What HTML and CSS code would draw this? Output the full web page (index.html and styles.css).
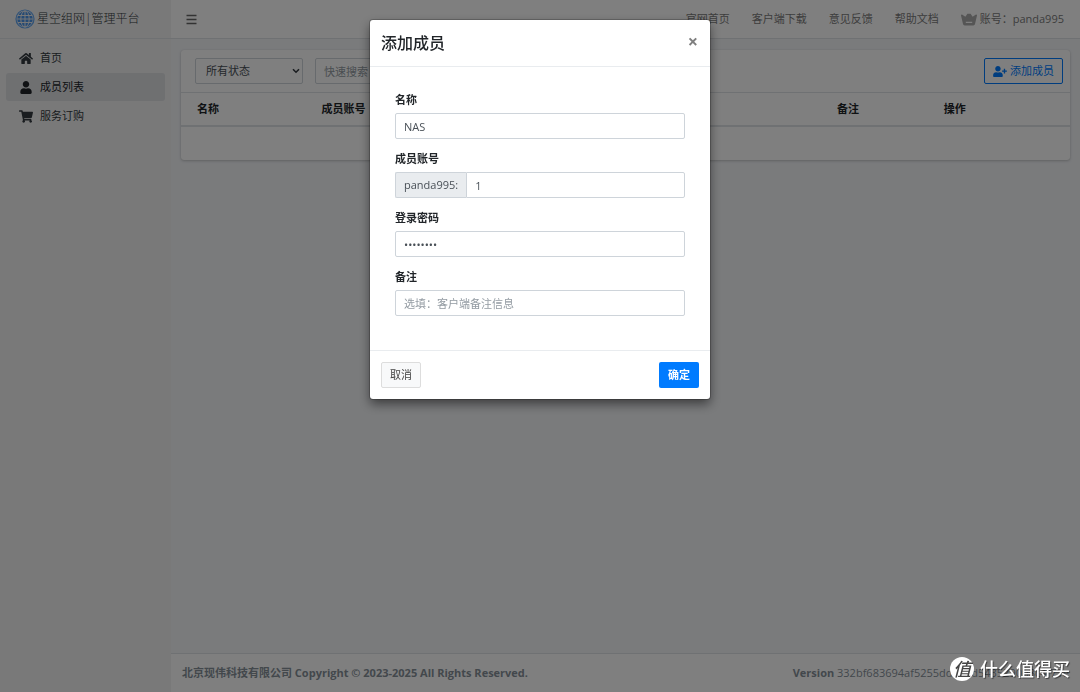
FILE: index.html
```html
<!DOCTYPE html>
<html lang="zh-CN">
<head>
<meta charset="utf-8">
<meta name="viewport" content="width=device-width, initial-scale=1">
<title>星空组网|管理平台</title>
<link rel="stylesheet" href="styles.css">
</head>
<body>
<div class="app">
  <aside class="sidebar">
    <a class="brand" href="#">
      <svg class="brand-logo" viewBox="0 0 20 20" fill="none" stroke="#eee" stroke-width="1">
        <circle cx="10" cy="10" r="9" stroke="#62a5ef" stroke-width="1.2"/>
        <circle cx="10" cy="10" r="7.8" fill="#4a94e8" stroke="none"/>
        <path d="M10 2v16M3 6.5h14M2 10h16M3 13.5h14"/>
        <ellipse cx="10" cy="10" rx="4.2" ry="8"/>
      </svg>
      <span>星空组网|管理平台</span>
    </a>
    <nav class="menu">
      <a class="menu-item" href="#">
        <svg class="icon" viewBox="0 0 576 512"><path d="M280.37 148.26L96 300.11V464a16 16 0 0 0 16 16l112.06-.29a16 16 0 0 0 15.92-16V368a16 16 0 0 1 16-16h64a16 16 0 0 1 16 16v95.64a16 16 0 0 0 16 16.05L464 480a16 16 0 0 0 16-16V300L295.67 148.26a12.19 12.19 0 0 0-15.3 0zM571.6 251.47L488 182.56V44.05a12 12 0 0 0-12-12h-56a12 12 0 0 0-12 12v72.61L318.47 43a48 48 0 0 0-61 0L4.34 251.47a12 12 0 0 0-1.6 16.9l25.5 31A12 12 0 0 0 45.15 301l235.22-193.74a12.19 12.19 0 0 1 15.3 0L530.9 301a12 12 0 0 0 16.9-1.6l25.5-31a12 12 0 0 0-1.7-16.93z"/></svg>
        <span>首页</span>
      </a>
      <a class="menu-item menu-item-active" href="#" aria-current="page">
        <svg class="icon" viewBox="0 0 448 512"><path d="M224 256c70.7 0 128-57.3 128-128S294.7 0 224 0 96 57.3 96 128s57.3 128 128 128zm89.6 32h-16.7c-22.2 10.2-46.9 16-72.9 16s-50.6-5.8-72.9-16h-16.7C60.2 288 0 348.2 0 422.4V464c0 26.5 21.5 48 48 48h352c26.5 0 48-21.5 48-48v-41.6c0-74.2-60.2-134.4-134.4-134.4z"/></svg>
        <span>成员列表</span>
      </a>
      <a class="menu-item" href="#">
        <svg class="icon" viewBox="0 0 576 512"><path d="M528.12 301.319l47.273-208C578.806 78.301 567.391 64 551.99 64H159.208l-9.166-44.81C147.758 8.021 137.93 0 126.529 0H24C10.745 0 0 10.745 0 24v16c0 13.255 10.745 24 24 24h69.883l70.248 343.435C147.325 417.1 136 435.222 136 456c0 30.928 25.072 56 56 56s56-25.072 56-56c0-15.674-6.447-29.835-16.824-40h209.647C430.447 426.165 424 440.326 424 456c0 30.928 25.072 56 56 56s56-25.072 56-56c0-22.172-12.888-41.332-31.579-50.405l5.517-24.276c3.413-15.018-8.002-29.319-23.403-29.319H218.117l-6.545-32h293.145c11.206 0 20.92-7.754 23.403-18.681z"/></svg>
        <span>服务订购</span>
      </a>
    </nav>
  </aside>

  <div class="page">
    <header class="topbar">
      <button class="toggle" type="button" aria-label="菜单">
        <svg viewBox="0 0 11 11" fill="none" stroke="currentColor" stroke-width="1.4"><path d="M.5 1.5h10M.5 5.5h10M.5 9.5h10"/></svg>
      </button>
      <nav class="links">
        <a href="#">官网首页</a>
        <a href="#">客户端下载</a>
        <a href="#">意见反馈</a>
        <a href="#">帮助文档</a>
        <a class="account" href="#">
          <svg class="crown" viewBox="0 0 16 14"><path fill-rule="evenodd" d="M1 2.6 4.4 4.8 6.400 1.800h3.200l2 3L15 2.600a.7.7 0 0 1 1 .8L14 12a1.800 1.800 0 0 1-1.700 1.500H3.700A1.800 1.800 0 0 1 2 12L0 3.400a.7.7 0 0 1 1-.8zM4.800 9.800v1.200h6.400V9.800z"/></svg>
          <span>账号：panda995</span>
        </a>
      </nav>
    </header>

    <main class="content">
      <section class="card">
        <div class="toolbar">
          <div class="status">
            <select class="status-select" aria-label="状态"><option>所有状态</option></select>
            <svg class="status-arrow" viewBox="0 0 8 6" fill="none" stroke="currentColor" stroke-width="1.6"><path d="M1 1.200 4 4.200l3-3"/></svg>
          </div>
          <input class="search" type="text" placeholder="快速搜索" aria-label="快速搜索">
          <button class="btn btn-outline" type="button">
            <svg class="btn-icon" viewBox="0 0 640 512"><path d="M624 208h-64v-64c0-8.800-7.200-16-16-16h-32c-8.800 0-16 7.200-16 16v64h-64c-8.800 0-16 7.200-16 16v32c0 8.800 7.200 16 16 16h64v64c0 8.800 7.200 16 16 16h32c8.800 0 16-7.200 16-16v-64h64c8.800 0 16-7.200 16-16v-32c0-8.800-7.200-16-16-16zm-400 48c70.700 0 128-57.300 128-128S294.700 0 224 0 96 57.300 96 128s57.300 128 128 128zm89.600 32h-16.700c-22.200 10.200-46.900 16-72.900 16s-50.600-5.800-72.900-16h-16.700C60.200 288 0 348.200 0 422.400V464c0 26.500 21.500 48 48 48h352c26.500 0 48-21.500 48-48v-41.600c0-74.200-60.200-134.400-134.400-134.400z"/></svg>
            添加成员
          </button>
        </div>
        <table class="members">
          <thead>
            <tr>
              <th class="col-name">名称</th>
              <th class="col-login">成员账号</th>
              <th class="col-note">备注</th>
              <th class="col-action">操作</th>
            </tr>
          </thead>
          <tbody><tr><td colspan="4"></td></tr></tbody>
        </table>
      </section>
    </main>

    <footer class="footer">
      <strong>北京现伟科技有限公司 Copyright © 2023-2025 All Rights Reserved.</strong>
      <span><b>Version</b> 332bf683694af5255dd12ad5435290b8c4f71e</span>
    </footer>
  </div>
</div>

<div class="backdrop">
  <form class="modal" role="dialog" aria-labelledby="modal-title">
    <div class="modal-header">
      <h1 class="modal-title" id="modal-title">添加成员</h1>
      <button class="close" type="button" aria-label="关闭">×</button>
    </div>
    <div class="modal-body">
      <div class="field">
        <label for="name">名称</label>
        <input class="control" id="name" type="text" value="NAS">
      </div>
      <div class="field">
        <label for="login">成员账号</label>
        <div class="group">
          <span class="prefix">panda995:</span>
          <input class="control" id="login" type="text" value="1">
        </div>
      </div>
      <div class="field">
        <label for="password">登录密码</label>
        <input class="control" id="password" type="password" value="12345678">
      </div>
      <div class="field">
        <label for="note">备注</label>
        <input class="control" id="note" type="text" placeholder="选填：客户端备注信息">
      </div>
    </div>
    <div class="modal-footer">
      <button class="btn btn-light" type="button">取消</button>
      <button class="btn btn-primary" type="submit">确定</button>
    </div>
  </form>
</div>

<div class="watermark">
  <span class="watermark-badge">值</span>
  <span>什么值得买</span>
</div>
</body>
</html>
```

FILE: styles.css
```css
*, *::before, *::after {
  box-sizing: border-box;
}

body {
  margin: 0;
  font-family: "Open Sans", "Noto Sans CJK SC", sans-serif;
  font-size: 11px;
  line-height: 16px;
  color: #212529;
  background: #f4f6f9;
}

a {
  color: inherit;
  text-decoration: none;
}

button, input, select {
  font: inherit;
}

.app {
  display: flex;
  min-height: 100vh;
}

.sidebar {
  flex: 0 0 171px;
  background: #f2f2f2;
}

.brand {
  display: flex;
  align-items: center;
  gap: 2px;
  height: 39px;
  padding-left: 15px;
  border-bottom: 1px solid #dee2e6;
  color: #343a40;
  font-size: 12px;
  font-weight: 300;
}

.brand-logo {
  width: 20px;
  height: 20px;
}

.menu {
  display: flex;
  flex-direction: column;
  gap: 1px;
  padding: 5px 6px;
}

.menu-item {
  display: flex;
  align-items: center;
  gap: 7px;
  height: 28px;
  padding: 0 13px;
  border-radius: 3px;
  color: #343a40;
}

.menu-item-active {
  background: #dee0e3;
  color: #212529;
}

.icon {
  width: 14px;
  height: 13px;
  fill: currentColor;
}

.page {
  display: flex;
  flex: 1;
  flex-direction: column;
  min-width: 0;
}

.topbar {
  display: flex;
  align-items: center;
  justify-content: space-between;
  height: 39px;
  padding: 0 16px 0 15px;
  border-bottom: 1px solid #dee2e6;
  background: #fff;
  color: #7b7b7b;
}

.toggle {
  display: flex;
  padding: 0;
  border: 0;
  background: none;
  color: #666;
}

.toggle svg {
  width: 11px;
  height: 11px;
}

.links {
  display: flex;
  gap: 22px;
}

.account {
  display: flex;
  align-items: center;
  gap: 3px;
}

.crown {
  width: 16px;
  height: 14px;
  fill: #aaa;
}

.content {
  flex: 1;
  padding: 11px 10px;
}

.card {
  border-radius: 3px;
  background: #fff;
  box-shadow: 0 0 1px rgba(0, 0, 0, .13), 0 1px 3px rgba(0, 0, 0, .2);
}

.toolbar {
  display: flex;
  align-items: center;
  gap: 12px;
  height: 43px;
  padding: 0 7px 0 14px;
  border-bottom: 1px solid #dee2e6;
}

.status {
  position: relative;
  width: 108px;
}

.status-select, .search {
  height: 26px;
  border: 1px solid #ced4da;
  border-radius: 2px;
  background: #fff;
  color: #495057;
}

.status-select {
  display: block;
  width: 100%;
  padding: 0 10px;
  appearance: none;
}

.status-arrow {
  position: absolute;
  top: 10px;
  right: 3px;
  width: 8px;
  height: 6px;
  color: #343a40;
  pointer-events: none;
}

.search {
  width: 160px;
  padding: 0 8px;
}

.search::placeholder {
  color: #939ba2;
}

.members {
  width: 100%;
  border-collapse: collapse;
  table-layout: fixed;
}

.members th {
  height: 33px;
  padding: 0 16px;
  border-bottom: 2px solid #dee2e6;
  text-align: left;
}

.members td {
  height: 34px;
}

.col-name {
  width: 14%;
}

.col-note {
  width: 12%;
}

.col-action {
  width: 16%;
}

.footer {
  display: flex;
  align-items: center;
  justify-content: space-between;
  height: 39px;
  padding: 0 11px;
  border-top: 1px solid #dee2e6;
  background: #fff;
  color: #869099;
}

.btn {
  height: 26px;
  padding: 0 8px;
  border: 1px solid transparent;
  border-radius: 2px;
}

.btn-outline {
  display: flex;
  align-items: center;
  gap: 3px;
  margin-left: auto;
  border-color: #007bff;
  background: none;
  color: #007bff;
}

.btn-icon {
  width: 14px;
  height: 11px;
  fill: currentColor;
}

.btn-light {
  border-color: #ddd;
  background: #f8f9fa;
  color: #444;
}

.btn-primary {
  background: #007bff;
  color: #fff;
  font-weight: 700;
}

.backdrop {
  position: fixed;
  inset: 0;
  padding: 20px;
  overflow: auto;
  background: rgba(0, 0, 0, .5);
}

.modal {
  max-width: 340px;
  margin: 0 auto;
  border-radius: 3px;
  background: #fff;
  box-shadow: 0 0 0 1px rgba(0, 0, 0, .2), 0 5px 11px rgba(0, 0, 0, .5);
}

.modal-header {
  display: flex;
  align-items: center;
  justify-content: space-between;
  height: 47px;
  padding: 0 11px;
  border-bottom: 1px solid #e9ecef;
}

.modal-title {
  margin: 0;
  font-size: 16px;
  font-weight: 500;
  line-height: 24px;
}

.close {
  padding: 0 1px 4px;
  border: 0;
  background: none;
  color: #7f7f7f;
  font-size: 18px;
  font-weight: 700;
}

.modal-body {
  display: flex;
  flex-direction: column;
  gap: 12px;
  padding: 25px 25px 34px;
}

.field {
  display: flex;
  flex-direction: column;
  gap: 5px;
}

.field label {
  font-weight: 700;
}

.control {
  width: 100%;
  height: 26px;
  padding: 0 8px;
  border: 1px solid #ced4da;
  border-radius: 2px;
  background: #fff;
  color: #495057;
}

.control::placeholder {
  color: #939ba2;
}

.group {
  display: flex;
}

.prefix {
  display: flex;
  align-items: center;
  padding: 0 8px;
  border: 1px solid #ced4da;
  border-right: 0;
  border-radius: 2px 0 0 2px;
  background: #e9ecef;
  color: #495057;
}

.group .control {
  flex: 1;
  min-width: 0;
  border-radius: 0 2px 2px 0;
}

.modal-footer {
  display: flex;
  justify-content: space-between;
  padding: 11px;
  border-top: 1px solid #e9ecef;
}

.watermark {
  position: fixed;
  right: 10px;
  bottom: 11px;
  display: flex;
  align-items: center;
  gap: 6px;
  color: #fff;
  font-size: 18px;
  font-weight: 500;
  line-height: 24px;
  text-shadow: 1px 1px 1px rgba(0, 0, 0, .5);
}

.watermark-badge {
  width: 24px;
  height: 24px;
  border-radius: 50%;
  background: #fff;
  color: #444;
  font-style: italic;
  text-align: center;
  text-shadow: none;
}
```
